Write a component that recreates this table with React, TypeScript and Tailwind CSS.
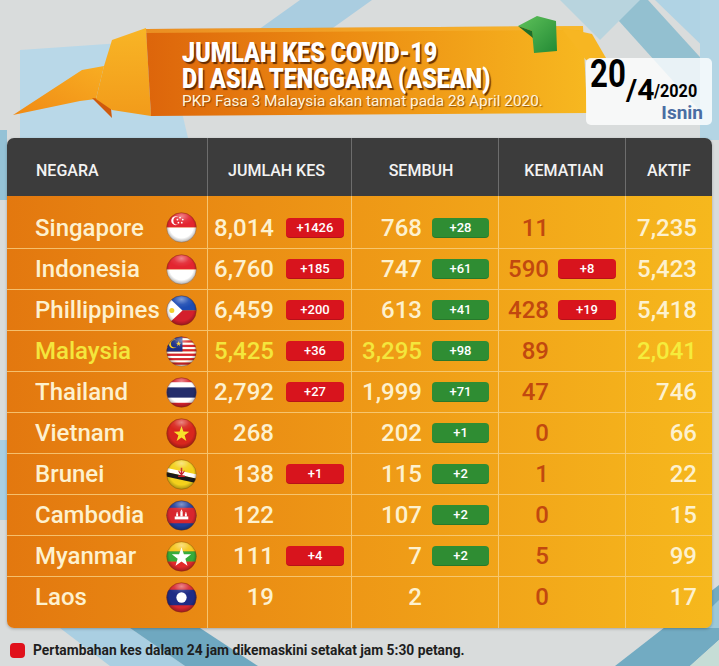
import React from "react";

type Row = {
  n: string;
  f: string;
  k: string;
  kd?: string;
  s: string;
  sd?: string;
  m: string;
  md?: string;
  a: string;
  hl?: boolean;
};

const rows: Row[] = [
  { n: "Singapore", f: "sg", k: "8,014", kd: "+1426", s: "768", sd: "+28", m: "11", a: "7,235" },
  { n: "Indonesia", f: "id", k: "6,760", kd: "+185", s: "747", sd: "+61", m: "590", md: "+8", a: "5,423" },
  { n: "Phillippines", f: "ph", k: "6,459", kd: "+200", s: "613", sd: "+41", m: "428", md: "+19", a: "5,418" },
  { n: "Malaysia", f: "my", k: "5,425", kd: "+36", s: "3,295", sd: "+98", m: "89", a: "2,041", hl: true },
  { n: "Thailand", f: "th", k: "2,792", kd: "+27", s: "1,999", sd: "+71", m: "47", a: "746" },
  { n: "Vietnam", f: "vn", k: "268", s: "202", sd: "+1", m: "0", a: "66" },
  { n: "Brunei", f: "bn", k: "138", kd: "+1", s: "115", sd: "+2", m: "1", a: "22" },
  { n: "Cambodia", f: "kh", k: "122", s: "107", sd: "+2", m: "0", a: "15" },
  { n: "Myanmar", f: "mm", k: "111", kd: "+4", s: "7", sd: "+2", m: "5", a: "99" },
  { n: "Laos", f: "la", k: "19", s: "2", m: "0", a: "17" },
];

function star(cx: number, cy: number, r: number) {
  const pts: string[] = [];
  for (let i = 0; i < 10; i++) {
    const rr = i % 2 === 0 ? r : r * 0.4;
    const ang = -Math.PI / 2 + (i * Math.PI) / 5;
    pts.push(`${(cx + rr * Math.cos(ang)).toFixed(2)},${(cy + rr * Math.sin(ang)).toFixed(2)}`);
  }
  return pts.join(" ");
}

function FlagBody({ f }: { f: string }) {
  switch (f) {
    case "sg":
      return (
        <g>
          <rect x="0" y="0" width="32" height="16" fill="#e3252f" />
          <rect x="0" y="16" width="32" height="16" fill="#ffffff" />
          <circle cx="10" cy="9" r="4.6" fill="#fff" />
          <circle cx="11.8" cy="9" r="4.2" fill="#e3252f" />
          <circle cx="14.5" cy="5.8" r="0.9" fill="#fff" />
          <circle cx="17.3" cy="7.8" r="0.9" fill="#fff" />
          <circle cx="16.3" cy="11" r="0.9" fill="#fff" />
          <circle cx="12.8" cy="11" r="0.9" fill="#fff" />
          <circle cx="11.8" cy="7.8" r="0.9" fill="#fff" />
        </g>
      );
    case "id":
      return (
        <g>
          <rect x="0" y="0" width="32" height="16" fill="#e3252f" />
          <rect x="0" y="16" width="32" height="16" fill="#ffffff" />
        </g>
      );
    case "ph":
      return (
        <g>
          <rect x="0" y="0" width="32" height="16" fill="#1d4cb3" />
          <rect x="0" y="16" width="32" height="16" fill="#d4202c" />
          <polygon points="0,0 17,16 0,32" fill="#ffffff" />
          <circle cx="6" cy="16" r="2.6" fill="#f3cf2a" />
        </g>
      );
    case "my": {
      const stripes = [];
      for (let i = 0; i < 14; i++) {
        stripes.push(
          <rect key={i} x="0" y={(i * 32) / 14} width="32" height={32 / 14 + 0.05} fill={i % 2 === 0 ? "#d52330" : "#ffffff"} />
        );
      }
      return (
        <g>
          {stripes}
          <rect x="0" y="0" width="17" height="16" fill="#1b2f86" />
          <circle cx="7.5" cy="8" r="4.6" fill="#f5cc1f" />
          <circle cx="9" cy="8" r="3.9" fill="#1b2f86" />
          <polygon points={star(13, 8, 2.8)} fill="#f5cc1f" />
        </g>
      );
    }
    case "th":
      return (
        <g>
          <rect x="0" y="0" width="32" height="32" fill="#d9232f" />
          <rect x="0" y="5.4" width="32" height="21.2" fill="#ffffff" />
          <rect x="0" y="10.7" width="32" height="10.6" fill="#232d6b" />
        </g>
      );
    case "vn":
      return (
        <g>
          <rect x="0" y="0" width="32" height="32" fill="#d8261d" />
          <polygon points={star(16, 16.8, 8.5)} fill="#f7e02a" />
        </g>
      );
    case "bn":
      return (
        <g>
          <rect x="0" y="0" width="32" height="32" fill="#f3d11c" />
          <polygon points="0,9 32,16 32,20.5 0,13.5" fill="#ffffff" />
          <polygon points="0,13.5 32,20.5 32,25 0,18" fill="#1a1a1a" />
          <path d="M12.5 12 Q16 20 19.5 12 L18.5 12 Q16 17 13.5 12 Z" fill="#c8202a" />
          <rect x="15.2" y="9" width="1.6" height="8" fill="#c8202a" />
          <rect x="12.5" y="17" width="7" height="1.6" fill="#c8202a" />
        </g>
      );
    case "kh":
      return (
        <g>
          <rect x="0" y="0" width="32" height="32" fill="#1f3f9c" />
          <rect x="0" y="8" width="32" height="16" fill="#d8262e" />
          <rect x="9" y="17" width="14" height="3" fill="#ffffff" />
          <rect x="10.5" y="14" width="2" height="3" fill="#ffffff" />
          <rect x="14.8" y="12" width="2.4" height="5" fill="#ffffff" />
          <rect x="19.5" y="14" width="2" height="3" fill="#ffffff" />
          <polygon points="10.5,14 11.5,12 12.5,14" fill="#fff" />
          <polygon points="14.8,12 16,9.5 17.2,12" fill="#fff" />
          <polygon points="19.5,14 20.5,12 21.5,14" fill="#fff" />
        </g>
      );
    case "mm":
      return (
        <g>
          <rect x="0" y="0" width="32" height="10.7" fill="#f6c61c" />
          <rect x="0" y="10.7" width="32" height="10.7" fill="#36ac3a" />
          <rect x="0" y="21.3" width="32" height="10.7" fill="#e12a2c" />
          <polygon points={star(16, 17, 10.5)} fill="#ffffff" />
        </g>
      );
    case "la":
      return (
        <g>
          <rect x="0" y="0" width="32" height="32" fill="#d8262e" />
          <rect x="0" y="8" width="32" height="16" fill="#1f2c86" />
          <circle cx="16" cy="16" r="5.3" fill="#ffffff" />
        </g>
      );
  }
  return null;
}

function Flag({ f }: { f: string }) {
  const clip = `clip-${f}`;
  const gloss = `gloss-${f}`;
  const shade = `shade-${f}`;
  return (
    <svg width="31" height="31" viewBox="0 0 32 32" className="shrink-0">
      <defs>
        <clipPath id={clip}>
          <circle cx="16" cy="16" r="15.3" />
        </clipPath>
        <radialGradient id={gloss} cx="50%" cy="22%" r="55%">
          <stop offset="0%" stopColor="#ffffff" stopOpacity="0.45" />
          <stop offset="60%" stopColor="#ffffff" stopOpacity="0.08" />
          <stop offset="100%" stopColor="#ffffff" stopOpacity="0" />
        </radialGradient>
        <radialGradient id={shade} cx="50%" cy="45%" r="55%">
          <stop offset="70%" stopColor="#000000" stopOpacity="0" />
          <stop offset="100%" stopColor="#000000" stopOpacity="0.35" />
        </radialGradient>
      </defs>
      <g clipPath={`url(#${clip})`}>
        <FlagBody f={f} />
        <rect x="0" y="0" width="32" height="32" fill={`url(#${shade})`} />
        <ellipse cx="16" cy="9" rx="12" ry="8" fill={`url(#${gloss})`} />
      </g>
      <circle cx="16" cy="16" r="15.3" fill="none" stroke="#7a3a08" strokeOpacity="0.45" strokeWidth="0.8" />
    </svg>
  );
}

function RedBadge({ t }: { t: string }) {
  return (
    <div className="w-[58px] h-[20px] rounded-[4px] bg-[#d8141d] text-white text-[13px] font-medium leading-[20px] text-center shadow-[inset_0_-1px_0_rgba(0,0,0,0.15)]">
      {t}
    </div>
  );
}

function GreenBadge({ t }: { t: string }) {
  return (
    <div className="w-[57px] h-[20px] rounded-[4px] bg-[#2f8d33] text-white text-[13px] font-medium leading-[20px] text-center shadow-[inset_0_-1px_0_rgba(0,0,0,0.15)]">
      {t}
    </div>
  );
}

const COLS = "grid grid-cols-[200px_144px_147px_127px_87px]";

function Background() {
  return (
    <svg className="absolute inset-0" width="719" height="666" viewBox="0 0 719 666">
      <rect width="719" height="666" fill="#d9dcdc" />
      <polygon points="300,0 372,0 330,30 258,30" fill="#aacde0" />
      <polygon points="600,0 648,0 719,78 719,132" fill="#93c0d0" />
      <polygon points="655,0 719,0 719,62" fill="#b0d3e4" />
      <polygon points="700,0 719,0 719,140 700,140" fill="#b4d5e4" />
      <polygon points="560,0 640,0 600,40" fill="#b8d4de" />
      <polygon points="20,50 165,40 188,138 20,138" fill="#b9d8e8" />
      <polygon points="0,130 7,130 7,200 0,200" fill="#95c2d6" />
      <polygon points="0,440 7,440 7,520 0,520" fill="#a9cfe2" />
      <polygon points="60,628 130,628 185,666 110,666" fill="#aacfe2" />
      <polygon points="130,628 200,628 258,666 185,666" fill="#6fa8c0" />
      <polygon points="719,585 719,640 690,666 615,666" fill="#72abc2" />
      <polygon points="719,640 719,666 690,666" fill="#c6ddd6" />
      <polygon points="690,628 719,600 719,628" fill="#9cc8d8" />
    </svg>
  );
}

function Banner() {
  return (
    <svg className="absolute inset-0" width="719" height="138" viewBox="0 0 719 138">
      <defs>
        <linearGradient id="bmain" x1="0" y1="0" x2="1" y2="0">
          <stop offset="0%" stopColor="#dd650b" />
          <stop offset="45%" stopColor="#ec8c12" />
          <stop offset="100%" stopColor="#f7b820" />
        </linearGradient>
        <linearGradient id="btail" x1="0" y1="1" x2="1" y2="0">
          <stop offset="0%" stopColor="#f08a14" />
          <stop offset="100%" stopColor="#f8ad22" />
        </linearGradient>
        <linearGradient id="bmid" x1="0" y1="0" x2="0" y2="1">
          <stop offset="0%" stopColor="#f8b526" />
          <stop offset="100%" stopColor="#f29b1a" />
        </linearGradient>
        <linearGradient id="bgreen" x1="0" y1="0" x2="1" y2="1">
          <stop offset="0%" stopColor="#5fc25a" />
          <stop offset="100%" stopColor="#238a35" />
        </linearGradient>
      </defs>
      <polygon points="13,115 82,70 104,66 96,99 80,101" fill="url(#btail)" />
      <polygon points="92,98 110,100 112,118" fill="#cf5a0c" />
      <polygon points="104,66 112,40 146,28 151,116 112,110 96,99" fill="url(#bmid)" />
      <polygon points="146,29 583,26 587,113 151,116" fill="url(#bmain)" />
      <polygon points="146,29 583,26 583,30 146,33" fill="#f7b73a" opacity="0.5" />
      <polygon points="560,27 592,34 606,58 586,60" fill="#f7b622" />
      <polygon points="518,26 537,16 556,21 557,51 534,53 532,31" fill="url(#bgreen)" />
      <polygon points="518,26 532,31 533,38" fill="#1d6e2a" />
    </svg>
  );
}

export default function App() {
  return (
    <div className="relative w-[719px] h-[666px] overflow-hidden font-['Roboto',_'Liberation_Sans',_sans-serif]">
      <Background />

      <header className="relative h-[138px]">
        <Banner />
        <div className="relative pl-[182px] pt-[40px] text-white font-black whitespace-nowrap">
          <div className="text-[28px] leading-[26px] [text-shadow:2px_2px_1px_rgba(80,32,0,0.85)]">
            <span className="inline-block origin-left scale-x-[0.835]">
              JUMLAH KES COVID-19
              <br />
              DI ASIA TENGGARA (ASEAN)
            </span>
          </div>
          <div className="text-[15.4px] leading-[16px] mt-[1px] font-normal text-[#fff4dc] [text-shadow:1px_1px_1px_rgba(110,50,0,0.7)]">
            PKP Fasa 3 Malaysia akan tamat pada 28 April 2020.
          </div>
        </div>

        <div className="absolute left-[586px] top-[58px] w-[126px] h-[67px] rounded-[5px] bg-white/80">
          <div className="flex items-start pl-[4px] text-black font-bold whitespace-nowrap">
            <span className="inline-block w-[36px] text-[38px] leading-[38px] mt-[-3px]">
              <span className="inline-block origin-left scale-x-[0.82]">20</span>
            </span>
            <span className="inline-block text-[30px] leading-[30px] mt-[17px]">/4</span>
            <span className="inline-block text-[18px] leading-[18px] mt-[24px]">
              <span className="inline-block origin-left scale-x-[0.9]">/2020</span>
            </span>
          </div>
          <div className="text-right pr-[9px] mt-[-2px] text-[19px] leading-[19px] font-bold text-[#4a6da3]">Isnin</div>
        </div>
      </header>

      <div className="relative ml-[7px] w-[705px] rounded-[7px] overflow-hidden shadow-[0_1px_3px_rgba(0,0,0,0.25)]">
        <div className={`${COLS} h-[58px] bg-[#3c3c3c] text-[#f3f3f3] text-[16px] font-medium`}>
          <div className="flex items-center pl-[29px] pt-[7px]">NEGARA</div>
          <div className="flex items-center justify-center pt-[7px] pr-[6px] border-l border-[#8d8d8d]/60">JUMLAH KES</div>
          <div className="flex items-center justify-center pt-[7px] pr-[8px] border-l border-[#8d8d8d]/60">SEMBUH</div>
          <div className="flex items-center justify-center pt-[7px] pl-[4px] border-l border-[#8d8d8d]/60">KEMATIAN</div>
          <div className="flex items-center justify-center pt-[7px] border-l border-[#8d8d8d]/60">AKTIF</div>
        </div>

        <div className="bg-linear-to-r from-[#e3780f] via-[#ee9816] to-[#f6b81d]">
          {rows.map((r, i) => {
            const first = i === 0;
            const last = i === rows.length - 1;
            const rowCls = first ? "h-[52px]" : last ? "h-[52px] border-t border-[#f9d183]/80" : "h-[41px] border-t border-[#f9d183]/80";
            const pad = first ? "pt-[11px]" : last ? "pb-[11px]" : "";
            const main = r.hl ? "text-[#f4e63c]" : "text-[#fdf1cf]";
            return (
              <div key={r.n} className={`${COLS} ${rowCls} text-[24px] font-medium leading-none`}>
                <div className={`flex items-center justify-between pl-[28px] pr-[10px] ${pad}`}>
                  <span className={main}>{r.n}</span>
                  <Flag f={r.f} />
                </div>
                <div className={`flex items-center border-l border-[#f9d183]/80 ${pad}`}>
                  <span className={`w-[66px] text-right ${main}`}>{r.k}</span>
                  <span className="ml-[12px]">{r.kd ? <RedBadge t={r.kd} /> : null}</span>
                </div>
                <div className={`flex items-center border-l border-[#f9d183]/80 ${pad}`}>
                  <span className={`w-[70px] text-right ${main}`}>{r.s}</span>
                  <span className="ml-[10px]">{r.sd ? <GreenBadge t={r.sd} /> : null}</span>
                </div>
                <div className={`flex items-center border-l border-[#f9d183]/80 ${pad}`}>
                  <span className="w-[50px] text-right text-[#c1480f]">{r.m}</span>
                  <span className="ml-[9px]">{r.md ? <RedBadge t={r.md} /> : null}</span>
                </div>
                <div className={`flex items-center justify-end pr-[15px] border-l border-[#f9d183]/80 ${pad}`}>
                  <span className={r.hl ? "text-[#f5ec3c]" : "text-[#fdf1cf]"}>{r.a}</span>
                </div>
              </div>
            );
          })}
        </div>
      </div>

      <footer className="relative flex items-center gap-[8px] pl-[10px] mt-[12px] h-[20px]">
        <span className="w-[15px] h-[15px] rounded-[4px] bg-[#e0111b]" />
        <span className="text-[13.8px] font-bold text-[#1e1e1e] whitespace-nowrap">
          Pertambahan kes dalam 24 jam dikemaskini setakat jam 5:30 petang.
        </span>
      </footer>
    </div>
  );
}
